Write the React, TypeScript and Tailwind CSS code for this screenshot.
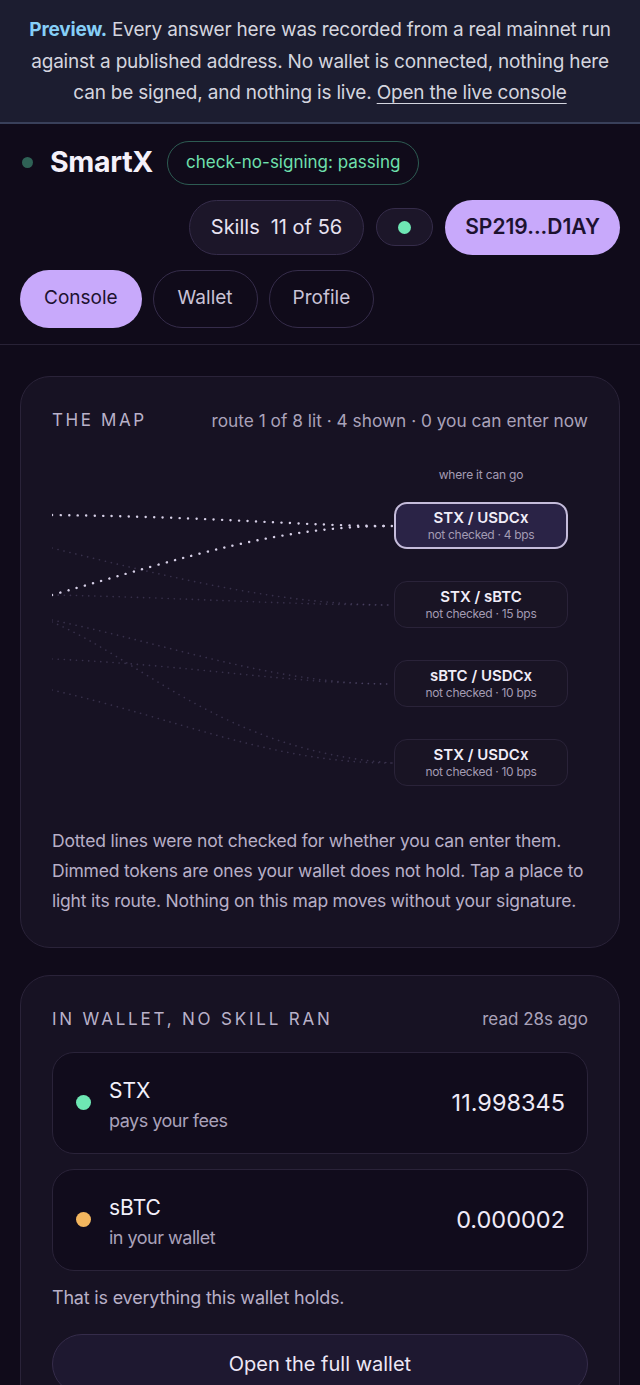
import React from 'react';

const nodes = [
  { pair: 'STX / USDCx', note: 'not checked · 4 bps', lit: true },
  { pair: 'STX / sBTC', note: 'not checked · 15 bps', lit: false },
  { pair: 'sBTC / USDCx', note: 'not checked · 10 bps', lit: false },
  { pair: 'STX / USDCx', note: 'not checked · 10 bps', lit: false },
];

// left source y -> node centre y, in svg units
const dimLines = [
  'M0 88 C120 118 230 145 340 145',
  'M0 135 C140 138 240 145 340 145',
  'M0 160 C120 185 220 224 340 224',
  'M0 199 C140 205 240 224 340 224',
  'M0 162 C90 200 170 290 340 303',
  'M0 230 C130 260 220 303 340 303',
];

function RouteMap() {
  return (
    <svg width="342" height="326" viewBox="0 0 342 326" className="shrink-0">
      {dimLines.map((d, i) => (
        <path
          key={i}
          d={d}
          fill="none"
          stroke="#6a5f86"
          strokeOpacity="0.4"
          strokeWidth="1.6"
          strokeDasharray="0.1 6"
          strokeLinecap="round"
        />
      ))}
      <path
        d="M0 55 C170 57 250 66 340 66"
        fill="none"
        stroke="#d6cfe6"
        strokeWidth="2.4"
        strokeDasharray="0.1 8.4"
        strokeLinecap="round"
      />
      <path
        d="M0 135 C140 95 230 66 340 66"
        fill="none"
        stroke="#d6cfe6"
        strokeWidth="2.4"
        strokeDasharray="0.1 8.4"
        strokeLinecap="round"
      />
    </svg>
  );
}

function Holding({ dot, name, sub, amount }: { dot: string; name: string; sub: string; amount: string }) {
  return (
    <div className="flex h-[102px] items-center rounded-[22px] border border-[#2a2339] bg-[#110c1c] pl-[23px] pr-[22px]">
      <span className={`h-[15px] w-[15px] rounded-full ${dot}`} />
      <div className="ml-[18px] mt-[6px] flex-1">
        <div className="text-[21px] leading-[30px] text-[#f3f0fa]">{name}</div>
        <div className="text-[18px] leading-[30px] tracking-[-0.5px] text-[#aaa2ba]">{sub}</div>
      </div>
      <div className="text-[23.5px] text-[#efeaf7]">{amount}</div>
    </div>
  );
}

export default function App() {
  return (
    <div className="min-h-[1385px] bg-[#100b1a] font-['Inter',sans-serif] text-white">
      <div className="border-b-2 border-[#39405a] bg-[#1c1d30] px-6 pt-[14px] pb-[13px] text-center text-[19px] leading-[31.5px] tracking-[-0.2px] text-[#d4d5df]">
        <span className="font-bold text-[#86cff7]">Preview.</span> Every answer here was recorded from a real mainnet run
        against a published address. No wallet is connected, nothing here can be signed, and nothing is live.{' '}
        <span className="underline underline-offset-4">Open the live console</span>
      </div>

      <div className="px-5 pt-[17px]">
        <div className="flex items-center">
          <span className="ml-[2px] h-[11px] w-[11px] rounded-full bg-[#2f6256]" />
          <span className="ml-[17px] text-[28.5px] font-bold tracking-[-0.3px] text-[#f4f1fa]">SmartX</span>
          <span className="ml-[14px] flex h-[44px] items-center rounded-full border border-[#2d5b52] px-[18px] text-[17px] text-[#6fe0ad]">
            check-no-signing: passing
          </span>
        </div>
        <div className="mt-[15px] flex items-center justify-end gap-3">
          <span className="flex h-[55px] items-center rounded-full border border-[#352c4a] bg-[#1c1629] px-[21px] text-[20px] text-[#e7e2f1]">
            Skills<span className="ml-[11px]">11 of 56</span>
          </span>
          <span className="flex h-[38px] w-[57px] items-center justify-center rounded-full border border-[#352c4a] bg-[#1c1629]">
            <span className="h-[13px] w-[13px] rounded-full bg-[#6ee7b4]" />
          </span>
          <span className="flex h-[55px] items-center rounded-full bg-[#c8a9fb] px-[20px] text-[21px] font-semibold text-[#1d1230]">
            SP219...D1AY
          </span>
        </div>
        <div className="mt-[15px] flex items-center gap-[11px]">
          <span className="flex h-[58px] items-center rounded-full bg-[#c8a9fb] px-[24px] text-[19px] text-[#1d1230]">Console</span>
          <span className="flex h-[58px] items-center rounded-full border border-[#352c4a] px-[24px] text-[19px] text-[#c9c2d6]">Wallet</span>
          <span className="flex h-[58px] items-center rounded-full border border-[#352c4a] px-[23px] text-[19px] text-[#c9c2d6]">Profile</span>
        </div>
      </div>

      <div className="mt-[16px] border-t border-[#282236]" />

      <div className="px-5 pt-[31px]">
        <div className="rounded-[30px] border border-[#2a2339] bg-[#171223] px-[31px] pt-[31px] pb-[31px]">
          <div className="flex items-center justify-between">
            <span className="text-[17px] tracking-[2.6px] text-[#b9b1c9]">THE MAP</span>
            <span className="text-[17.3px] text-[#aaa2ba]">route 1 of 8 lit · 4 shown · 0 you can enter now</span>
          </div>
          <div className="mt-[27px] flex">
            <RouteMap />
            <div className="flex w-[174px] flex-col">
              <div className="mt-[5px] text-center text-[12px] leading-[20px] tracking-[-0.2px] text-[#a49cb4]">where it can go</div>
              <div className="mt-[17px] flex flex-col gap-[32px]">
                {nodes.map((n, i) => (
                  <div
                    key={i}
                    className={
                      n.lit
                        ? 'flex h-[47px] flex-col items-center justify-center rounded-[13px] border-2 border-[#c5bcdb] bg-[#2a2346]'
                        : 'flex h-[47px] flex-col items-center justify-center rounded-[13px] border border-[#2a2339] bg-[#191424]'
                    }
                  >
                    <div className="text-[15px] leading-[18px] font-semibold text-[#f1edf8]">{n.pair}</div>
                    <div className="text-[12px] leading-[16px] tracking-[-0.3px] text-[#a39bb3]">{n.note}</div>
                  </div>
                ))}
              </div>
            </div>
          </div>
          <p className="mt-[40px] text-[17.5px] leading-[30px] tracking-[-0.2px] text-[#b7afc7]">
            Dotted lines were not checked for whether you can enter them. Dimmed tokens are ones your wallet does not
            hold. Tap a place to light its route. Nothing on this map moves without your signature.
          </p>
        </div>

        <div className="mt-[27px] rounded-[30px] border border-[#2a2339] bg-[#171223] px-[31px] pt-[31px] pb-[31px]">
          <div className="flex items-center justify-between">
            <span className="text-[17px] tracking-[2.8px] text-[#b9b1c9]">IN WALLET, NO SKILL RAN</span>
            <span className="text-[17px] text-[#aaa2ba]">read 28s ago</span>
          </div>
          <div className="mt-[19px] flex flex-col gap-[15px]">
            <Holding dot="bg-[#6ee7b4]" name="STX" sub="pays your fees" amount="11.998345" />
            <Holding dot="bg-[#f3b65e]" name="sBTC" sub="in your wallet" amount="0.000002" />
          </div>
          <p className="mt-[12px] text-[18px] leading-[30px] tracking-[-0.2px] text-[#b7afc7]">That is everything this wallet holds.</p>
          <div className="mt-[21px] flex h-[60px] items-center justify-center rounded-full border border-[#352c4a] bg-[#1e1830] text-[20px] text-[#ede8f6]">
            Open the full wallet
          </div>
        </div>
      </div>
    </div>
  );
}
